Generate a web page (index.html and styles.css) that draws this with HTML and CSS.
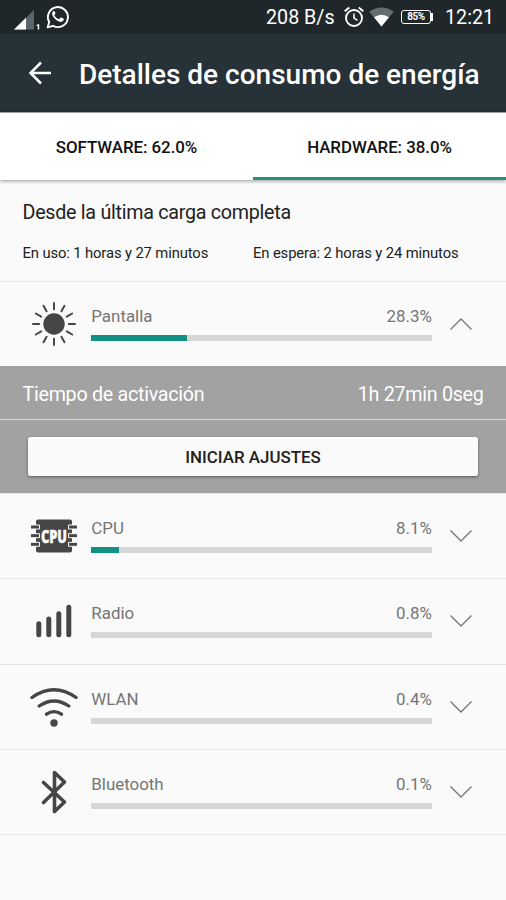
FILE: index.html
```html
<!DOCTYPE html>
<html lang="es">
<head>
<meta charset="utf-8">
<title>Detalles de consumo de energía</title>
<link rel="stylesheet" href="styles.css">
</head>
<body>
<div class="status">
  <svg class="status-signal" width="28" height="24" viewBox="0 0 28 24">
    <path d="M0 21.500 20 2V21.500z" fill="#5c6569"/><path d="M0 21.500 12 9.800V21.500z" fill="#fff"/>
    <path d="M22.600 17.600l1.900-.7V21.500" fill="none" stroke="#fff" stroke-width="1.400"/>
  </svg>
  <svg class="status-chat" width="24" height="24" viewBox="0 0 24 24">
    <path d="M1.600 22.400 3.200 17A10 10 0 1 1 7 20.800z" fill="none" stroke="#fff" stroke-width="1.900" stroke-linejoin="round"/>
    <path d="M8.500 6.500c-.4-.7-1-.6-1.500-.1-1.200 1.300-1.100 3.200.1 5.100 1.700 2.600 3.900 4.500 6.600 5.300 1.700.4 3.500-.3 4-1.700.2-.8.1-1.200-.4-1.500l-2.100-1c-.5-.2-.8-.1-1.100.3l-.8 1c-.3.300-.5.300-.9.100-1.800-.8-3-2-3.900-3.600-.2-.4-.1-.6.200-.9l.6-.8c.2-.3.200-.5.100-.8z" fill="#fff"/>
  </svg>
  <span class="speed">208 B/s</span>
  <svg class="status-alarm" width="20" height="22" viewBox="0 0 20 22" fill="none" stroke="#fff">
    <circle cx="10" cy="12" r="8" stroke-width="1.900"/><path d="M10 7.400V12.200l3.500 2.100" stroke-width="1.500"/>
    <path d="M.7 5.200 5.300 1.400M19.300 5.200 14.700 1.400" stroke-width="1.900"/>
  </svg>
  <svg class="status-wifi" width="25" height="20" viewBox="0 0 25 20">
    <path d="M.3 4.800Q12.500-3.600 24.700 4.800L12.500 19.500z" fill="#656d70"/><path d="M5 10.200Q12.500 5.200 20 10.200L12.500 19.500z" fill="#fff"/>
  </svg>
  <span class="battery">85%</span>
  <span class="clock">12:21</span>
</div>
<header class="appbar">
  <svg class="back" width="24" height="24" viewBox="0 0 24 24" fill="none" stroke="#fff" stroke-width="2.500"><path d="M23 12H2.500M13 1.500 2.500 12 13 22.500"/></svg>
  <h1>Detalles de consumo de energía</h1>
</header>
<nav class="tabs">
  <div class="tab">SOFTWARE: 62.0%</div>
  <div class="tab active">HARDWARE: 38.0%</div>
</nav>
<section class="summary">
  <h2>Desde la última carga completa</h2>
  <div class="times"><span>En uso: 1 horas y 27 minutos</span><span>En espera: 2 horas y 24 minutos</span></div>
</section>
<main>
  <div class="row">
    <svg class="icon" viewBox="-25 -25 50 50">
      <circle r="10.700" fill="#464646"/>
      <g stroke="#464646" stroke-width="2" stroke-linecap="round">
        <path d="M0-14.800V-21M0 14.800V21M-14.800 0H-21M14.800 0H21"/>
        <path d="M0-14.800V-21M0 14.800V21M-14.800 0H-21M14.800 0H21" transform="rotate(30)"/>
        <path d="M0-14.800V-21M0 14.800V21M-14.800 0H-21M14.800 0H21" transform="rotate(60)"/>
      </g>
    </svg>
    <div class="usage"><div class="label"><span>Pantalla</span><span>28.3%</span></div><div class="bar"><i style="width:28.100%"></i></div></div>
    <svg class="chevron" viewBox="0 0 24 14"><path d="M1.500 12.500 12 2 22.500 12.500"/></svg>
  </div>
  <div class="detail"><span>Tiempo de activación</span><span>1h 27min 0seg</span></div>
  <div class="action"><button>INICIAR AJUSTES</button></div>
  <div class="row">
    <svg class="icon" viewBox="-25 -25 50 50">
      <rect x="-18" y="-16.500" width="36" height="33" rx="2" fill="#464646"/>
      <g fill="#464646" stroke="#fafafa" stroke-width="1">
        <path d="M-23.500-11h9v4h-9zM-23.500-2.300h9v4h-9zM-23.500 6.300h9v4h-9zM14.500-11h9v4h-9zM14.500-2.300h9v4h-9zM14.500 6.300h9v4h-9z"/>
      </g>
      <text class="chip" x="0" y="7" text-anchor="middle" textLength="26" lengthAdjust="spacingAndGlyphs">CPU</text>
    </svg>
    <div class="usage"><div class="label"><span>CPU</span><span>8.1%</span></div><div class="bar"><i style="width:8.100%"></i></div></div>
    <svg class="chevron" viewBox="0 0 24 14"><path d="M1.500 1.500 12 12 22.500 1.500"/></svg>
  </div>
  <div class="row">
    <svg class="icon" viewBox="-25 -25 50 50"><path d="M-15.200 13.800V2.700M-5.200 13.800V-1.900M4.800 13.800V-7.200M14.800 13.800V-13.800" stroke="#464646" stroke-width="5" stroke-linecap="round"/></svg>
    <div class="usage"><div class="label"><span>Radio</span><span>0.8%</span></div><div class="bar"></div></div>
    <svg class="chevron" viewBox="0 0 24 14"><path d="M1.500 1.500 12 12 22.500 1.500"/></svg>
  </div>
  <div class="row">
    <svg class="icon" viewBox="-25 -25 50 50"><g fill="none" stroke="#464646" stroke-width="3.300" stroke-linecap="round"><path d="M-22-9.500Q0-25 22-9.500M-14.800-1Q0-11 14.800-1M-7.500 7.200Q0 2 7.500 7.200"/></g><circle cy="16" r="3.700" fill="#464646"/></svg>
    <div class="usage"><div class="label"><span>WLAN</span><span>0.4%</span></div><div class="bar"></div></div>
    <svg class="chevron" viewBox="0 0 24 14"><path d="M1.500 1.500 12 12 22.500 1.500"/></svg>
  </div>
  <div class="row">
    <svg class="icon" viewBox="-25 -25 50 50"><path d="M-10.500-9.500 10.500 10 .5 19.500V-19.500L10.500-10-10.500 10.500" fill="none" stroke="#464646" stroke-width="3.600" stroke-linejoin="round" stroke-linecap="round"/></svg>
    <div class="usage"><div class="label"><span>Bluetooth</span><span>0.1%</span></div><div class="bar"></div></div>
    <svg class="chevron" viewBox="0 0 24 14"><path d="M1.500 1.500 12 12 22.500 1.500"/></svg>
  </div>
</main>
</body>
</html>
```
FILE: styles.css
```css
* { box-sizing: border-box; }
body {
  margin: 0;
  height: 900px;
  overflow: hidden;
  background: #fafafa;
  color: #212121;
  font-family: Roboto, sans-serif;
}
svg { display: block; flex: none; }
.status {
  display: flex;
  align-items: center;
  height: 34px;
  padding: 0 12px 0 14px;
  background: #20272a;
  color: #fff;
  white-space: nowrap;
}
.status-signal { margin-top: 5px; }
.status-chat { margin-left: 4px; }
.speed { margin-left: auto; font-size: 19.700px; width: 69px; }
.status-alarm { margin-left: 9px; }
.status-wifi { margin-left: 5px; }
.battery {
  position: relative;
  width: 30px;
  height: 14px;
  margin: 0 0 0 7px;
  border: 1px solid #fff;
  border-radius: 3px;
  font-size: 10px;
  font-weight: 700;
  letter-spacing: -.5px;
  line-height: 12px;
  text-align: center;
}
.battery::after {
  content: "";
  position: absolute;
  right: -3px;
  top: 2px;
  width: 2px;
  height: 8px;
  background: #fff;
}
.clock { margin-left: 14px; width: 49px; font-size: 19.700px; }
.appbar {
  display: flex;
  align-items: center;
  height: 78px;
  padding-left: 28px;
  background: #263238;
  color: #fff;
}
.appbar h1 {
  margin: 2px 0 0 27px;
  font-size: 28px;
  font-weight: 500;
  white-space: nowrap;
}
.tabs {
  position: relative;
  display: flex;
  height: 68px;
  border-top: 1px solid #999d9f;
  background: #fff;
  box-shadow: 0 1px 4px rgba(0, 0, 0, .4);
}
.tab {
  flex: 1;
  padding-top: 1px;
  border-bottom: 3px solid transparent;
  color: #111;
  font-size: 16.900px;
  font-weight: 500;
  letter-spacing: -.05px;
  line-height: 66px;
  text-align: center;
}
.active { border-color: #26907f; }
.summary { height: 101px; padding: 21px 23px 0 22.500px; }
.summary h2 { margin: 0; font-size: 19.700px; font-weight: 400; letter-spacing: -.27px; line-height: 24px; }
.times { display: flex; margin-top: 18px; font-size: 14.800px; letter-spacing: -.12px; line-height: 20px; white-space: nowrap; }
.times span { flex: 0 0 230.500px; }
.row {
  display: flex;
  align-items: center;
  height: 85.300px;
  padding-left: 28.500px;
  border-top: 1px solid #e4e4e4;
}
.row:last-child { height: 86.300px; border-bottom: 1px solid #e4e4e4; }
.icon { width: 50px; height: 50px; }
.usage { flex: none; width: 340.500px; margin: -1px 0 0 12.800px; color: #757575; }
.label { display: flex; justify-content: space-between; font-size: 16.900px; line-height: 20px; }
.bar { height: 6px; margin-top: 9px; background: #d6d6d6; }
.bar i { display: block; height: 6px; background: #119184; }
.chevron { width: 24px; height: 14px; margin-left: 17px; fill: none; stroke: #777; stroke-width: 1.400; }
.chip { fill: #fafafa; stroke: #fafafa; stroke-width: .5; font: 800 18px "Open Sans", sans-serif; }
.detail {
  display: flex;
  justify-content: space-between;
  height: 52.700px;
  padding: 1px 22.500px 0;
  background: #a2a2a2;
  color: #fff;
  font-size: 19.700px;
  letter-spacing: -.28px;
  line-height: 55px;
}
.action {
  height: 74px;
  padding: 17px 28px;
  border-top: 1px solid #d8d8d8;
  background: #a2a2a2;
}
.action button {
  display: block;
  width: 100%;
  height: 39px;
  padding: 2px 0 0;
  border: 0;
  border-radius: 2.500px;
  background: #fafafa;
  box-shadow: 0 1px 3px rgba(0, 0, 0, .45);
  color: #212121;
  font: 500 16.900px Roboto, sans-serif;
}
```
